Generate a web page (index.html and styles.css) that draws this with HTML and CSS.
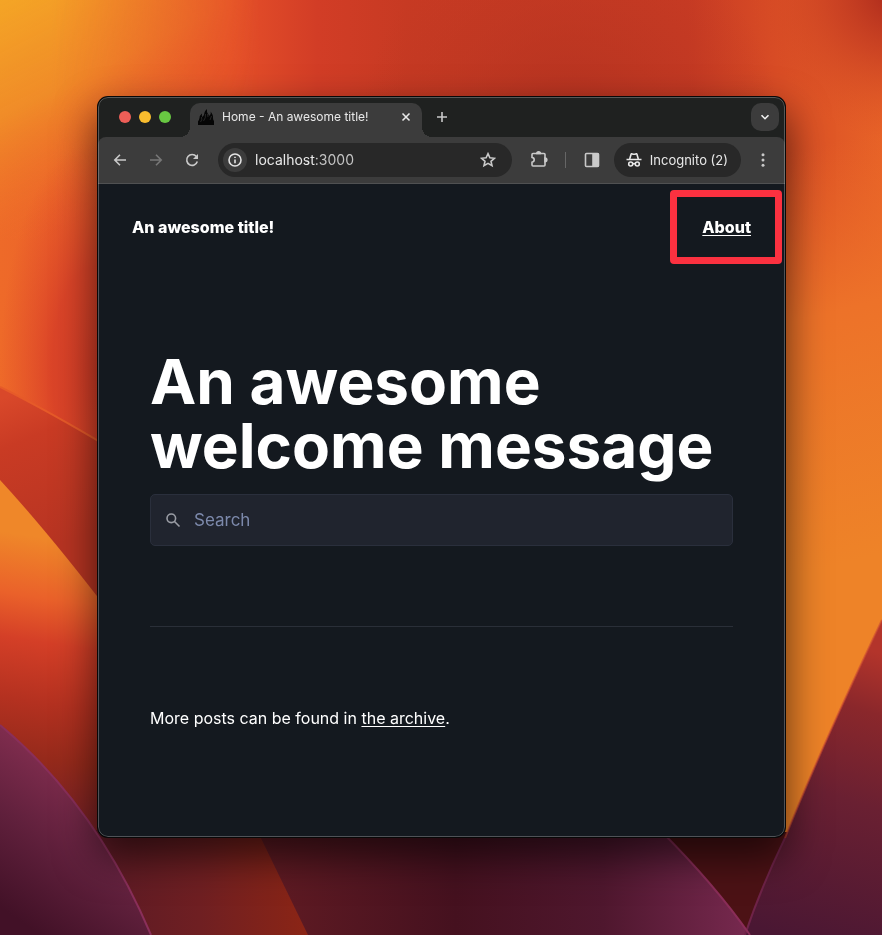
FILE: index.html
```html
<!DOCTYPE html>
<html lang="en">
<head>
<meta charset="utf-8">
<title>Home - An awesome title!</title>
<link rel="stylesheet" href="styles.css">
</head>
<body>
<svg class="wallpaper" viewBox="0 0 882 935" preserveAspectRatio="none" aria-hidden="true">
  <defs>
    <linearGradient id="base" x1="0" y1="0" x2="882" y2="0" gradientUnits="userSpaceOnUse">
      <stop offset="0" stop-color="#ee6a29"/><stop offset=".13" stop-color="#e95c2a"/><stop offset=".26" stop-color="#e65029"/><stop offset=".36" stop-color="#d23d26"/><stop offset=".46" stop-color="#c73a23"/><stop offset=".78" stop-color="#c83b24"/><stop offset=".88" stop-color="#d84c25"/><stop offset="1" stop-color="#e76227"/>
    </linearGradient>
    <linearGradient id="sun" x1="0" y1="0" x2="105" y2="210" gradientUnits="userSpaceOnUse">
      <stop offset="0" stop-color="#f4a526"/><stop offset=".45" stop-color="#f09028" stop-opacity=".9"/><stop offset="1" stop-color="#ee6b2a" stop-opacity="0"/>
    </linearGradient>
    <linearGradient id="sunFade" x1="0" y1="0" x2="260" y2="0" gradientUnits="userSpaceOnUse">
      <stop offset=".2" stop-color="#fff"/><stop offset="1" stop-color="#000"/>
    </linearGradient>
    <mask id="sunMask"><rect width="270" height="240" fill="url(#sunFade)"/></mask>
    <radialGradient id="topDeep" cx="570" cy="130" r="210" gradientUnits="userSpaceOnUse">
      <stop offset="0" stop-color="#b43220"/><stop offset="1" stop-color="#b93621" stop-opacity="0"/>
    </radialGradient>
    <radialGradient id="topRed" cx="900" cy="-10" r="150" gradientUnits="userSpaceOnUse">
      <stop offset=".1" stop-color="#b02d1d"/><stop offset=".45" stop-color="#c33a22" stop-opacity=".7"/><stop offset="1" stop-color="#d94e26" stop-opacity="0"/>
    </radialGradient>
    <linearGradient id="rightSide" x1="760" y1="160" x2="860" y2="560" gradientUnits="userSpaceOnUse">
      <stop offset="0" stop-color="#ec6b29" stop-opacity="0"/><stop offset=".4" stop-color="#ed7229"/><stop offset="1" stop-color="#ee8328"/>
    </linearGradient>
    <radialGradient id="leftRed" cx="95" cy="370" r="1" gradientUnits="userSpaceOnUse" gradientTransform="translate(95 370) scale(95 230) translate(-95 -370)">
      <stop offset="0" stop-color="#d43d27"/><stop offset=".45" stop-color="#d94128" stop-opacity=".9"/><stop offset="1" stop-color="#e24c29" stop-opacity="0"/>
    </radialGradient>
    <linearGradient id="leftSlope" x1="10" y1="395" x2="70" y2="540" gradientUnits="userSpaceOnUse">
      <stop offset="0" stop-color="#d9482a"/><stop offset=".3" stop-color="#c93b24"/><stop offset="1" stop-color="#b73422"/>
    </linearGradient>
    <linearGradient id="leftFlame" x1="60" y1="540" x2="20" y2="810" gradientUnits="userSpaceOnUse">
      <stop offset="0" stop-color="#ef8729"/><stop offset=".22" stop-color="#ea612a"/><stop offset=".38" stop-color="#d43f27"/><stop offset=".6" stop-color="#b43120"/><stop offset=".8" stop-color="#962a1b"/><stop offset="1" stop-color="#7a2224"/>
    </linearGradient>
    <linearGradient id="leftPurple" x1="80" y1="770" x2="-10" y2="900" gradientUnits="userSpaceOnUse">
      <stop offset="0" stop-color="#832e50"/><stop offset=".5" stop-color="#60203c"/><stop offset="1" stop-color="#421127"/>
    </linearGradient>
    <linearGradient id="floor" x1="90" y1="0" x2="310" y2="0" gradientUnits="userSpaceOnUse">
      <stop offset="0" stop-color="#5a1a25"/><stop offset=".5" stop-color="#6f1f22"/><stop offset="1" stop-color="#8c2515"/>
    </linearGradient>
    <linearGradient id="middle" x1="260" y1="0" x2="750" y2="0" gradientUnits="userSpaceOnUse">
      <stop offset="0" stop-color="#611b23"/><stop offset=".4" stop-color="#45111f"/><stop offset=".7" stop-color="#4f172e"/><stop offset="1" stop-color="#77294f"/>
    </linearGradient>
    <linearGradient id="rightPurple" x1="870" y1="650" x2="780" y2="935" gradientUnits="userSpaceOnUse">
      <stop offset="0" stop-color="#b3342b"/><stop offset=".2" stop-color="#8a272b"/><stop offset=".5" stop-color="#6a2032"/><stop offset="1" stop-color="#4a1733"/>
    </linearGradient>
  </defs>
  <rect width="882" height="935" fill="url(#base)"/>
  <rect width="270" height="240" fill="url(#sun)" mask="url(#sunMask)"/>
  <rect x="340" width="450" height="345" fill="url(#topDeep)"/>
  <rect x="740" width="142" height="160" fill="url(#topRed)"/>
  <rect x="700" y="100" width="182" height="835" fill="url(#rightSide)"/>
  <rect y="130" width="190" height="480" fill="url(#leftRed)"/>
  <path d="M0 387 Q50 412 110 448 V650 L0 482Z" fill="url(#leftSlope)"/>
  <path d="M0 387 Q50 412 110 448" fill="none" stroke="#e65a29" stroke-width="2"/>
  <path d="M0 480 Q48 532 110 613 V935 H0Z" fill="url(#leftFlame)"/>
  <path d="M90 830 H260 L310 935 H90Z" fill="url(#floor)"/>
  <path d="M257 830 L308 935 H750 Q722 890 660 830Z" fill="url(#middle)"/>
  <path d="M660 830 Q715 885 750 935 L788 832Z" fill="#4c1215"/>
  <path d="M882 620 Q820 750 785 838 Q760 890 745 935 H882Z" fill="url(#rightPurple)"/>
  <path d="M785 838 Q760 890 745 935" fill="none" stroke="#6f2348" stroke-width="2"/>
  <path d="M882 620 Q820 750 785 838" fill="none" stroke="#c94a32" stroke-width="2" opacity=".6"/>
  <path d="M660 830 Q715 885 750 935" fill="none" stroke="#8a2d58" stroke-width="2"/>
  <path d="M0 725 Q96 805 151 935 H0Z" fill="url(#leftPurple)"/>
  <path d="M0 725 Q96 805 151 935" fill="none" stroke="#8a2f5a" stroke-width="2"/>
</svg>

<div class="window">
  <header class="chrome">
    <div class="tabstrip">
      <div class="lights"><i class="red"></i><i class="yellow"></i><i class="green"></i></div>
      <div class="tab">
        <svg class="favicon" viewBox="0 0 16 16" aria-hidden="true"><path d="M0 16V12.500Q1 11 1.500 9 1.500 6.500 4 4.500 3.500 7 4.500 8 6.500 6 6.500 3.500 7 1.500 9 0 8.500 3 10 5 11 6 11 7 13.500 5 12.500 2.500 15.500 6 15 9 15 11 16 12V16Z" fill="#050505"/><path d="M2.500 13Q4.500 11 3.500 8M5.500 12Q8 9 7.500 5M10 8 9.500 5M12 11 13.500 7" fill="none" stroke="#333" stroke-width=".7"/></svg>
        <span class="tab-title">Home - An awesome title!</span>
        <button class="icon-btn small" aria-label="Close tab"><svg viewBox="0 0 16 16"><path d="M4 4l8 8m0-8l-8 8"/></svg></button>
      </div>
      <button class="icon-btn new-tab" aria-label="New tab"><svg viewBox="0 0 16 16"><path d="M8 3v10M3 8h10"/></svg></button>
      <button class="icon-btn tab-search" aria-label="Search tabs"><svg viewBox="0 0 16 16"><path d="M4.500 6.200l3.500 3.500 3.500-3.500"/></svg></button>
    </div>
    <div class="toolbar">
      <div class="history">
        <button class="icon-btn" aria-label="Back"><svg viewBox="0 0 16 16"><path d="M14 8H3M8 2.800L2.800 8 8 13.200"/></svg></button>
        <button class="icon-btn dim" aria-label="Forward" disabled><svg viewBox="0 0 16 16"><path d="M2 8h11M8 2.800L13.200 8 8 13.200"/></svg></button>
        <button class="icon-btn" aria-label="Reload"><svg viewBox="0 0 16 16"><path d="M13.300 9.500A5.400 5.400 0 1 1 12.300 4.500"/><path d="M14 2v5H9z" fill="currentColor" stroke="none"/></svg></button>
      </div>
      <div class="address">
        <button class="icon-btn site-info" aria-label="Site information"><svg viewBox="0 0 16 16"><circle cx="8" cy="8" r="6"/><path d="M8 7.400v3.800M8 4.700v1.400"/></svg></button>
        <span class="url">localhost<span>:3000</span></span>
        <button class="icon-btn" aria-label="Bookmark"><svg viewBox="0 0 16 16"><path d="M8 1.700l1.900 4.100 4.500.5-3.400 3 1 4.400L8 11.400l-4 2.300 1-4.400-3.400-3 4.500-.5z"/></svg></button>
      </div>
      <div class="actions">
        <button class="icon-btn" aria-label="Extensions"><svg class="puzzle" viewBox="0 0 20 20"><path d="M4 3.500H15Q16 3.500 16 4.500V15Q16 16 15 16H4Q3 16 3 15V12.200Q5.200 11.800 5.200 9.800T3 7.400V4.500Q3 3.500 4 3.500Z"/><path d="M7.800 3.500a1.800 1.800 0 0 1 3.600 0zM16 8a1.800 1.800 0 0 1 0 3.600z" fill="currentColor"/></svg></button>
        <span class="divider"></span>
        <button class="icon-btn" aria-label="Side panel"><svg viewBox="0 0 16 16"><rect x="1.500" y="1.500" width="13" height="13" rx="1"/><path d="M9 2h5v12H9z" fill="currentColor"/></svg></button>
      </div>
      <button class="incognito"><svg viewBox="0 0 16 16" aria-hidden="true"><path d="M.5 7.500h15"/><path d="M3.700 7L5 2.500Q5.300 1.500 6.300 1.900 8 2.600 9.700 1.900 10.700 1.500 11 2.500L12.300 7"/><circle cx="4.700" cy="12" r="2"/><circle cx="11.300" cy="12" r="2"/><path d="M6.700 12q1.300-1 2.600 0"/></svg>Incognito (2)</button>
      <button class="icon-btn menu" aria-label="Menu"><svg viewBox="0 0 16 16"><g fill="currentColor" stroke="none"><circle cx="8" cy="2.800" r="1.500"/><circle cx="8" cy="8" r="1.500"/><circle cx="8" cy="13.200" r="1.500"/></g></svg></button>
    </div>
  </header>

  <div class="page">
    <nav class="nav">
      <a class="brand" href="#">An awesome title!</a>
      <a class="about" href="#about">About</a>
    </nav>
    <main class="content">
      <h1>An awesome welcome message</h1>
      <label class="search">
        <svg viewBox="0 0 16 16" aria-hidden="true"><circle cx="6.300" cy="6.300" r="4.300"/><path d="M9.500 9.500l5 5"/></svg>
        <input type="search" placeholder="Search" aria-label="Search">
      </label>
      <hr>
      <p>More posts can be found in <a href="#archive">the archive</a>.</p>
    </main>
  </div>
</div>
</body>
</html>
```
FILE: styles.css
```css
* { box-sizing: border-box; }

body {
  margin: 0;
  min-height: 100vh;
  padding: 97px 97px 98px 98px;
  display: flex;
  font-family: Inter, "Liberation Sans", sans-serif;
  color: #fff;
}

.wallpaper {
  position: fixed;
  inset: 0;
  width: 100%;
  height: 100%;
  z-index: -1;
}

.window {
  flex: 1;
  display: flex;
  flex-direction: column;
  min-width: 0;
  position: relative;
  border-radius: 10px;
  overflow: hidden;
  background: #14191f;
  box-shadow: 0 0 0 1px #080808, 0 18px 40px 2px rgba(0, 0, 0, .6);
}

.window::after {
  content: "";
  position: absolute;
  inset: 0;
  border: 1px solid rgba(255, 255, 255, .25);
  border-radius: inherit;
  pointer-events: none;
}

.chrome { background: #1f2120; color: #c9c9c9; }

button {
  border: 0;
  padding: 0;
  background: none;
  color: inherit;
  font: inherit;
}

svg { display: block; }

.icon-btn {
  flex: none;
  width: 24px;
  height: 24px;
  display: grid;
  place-items: center;
}

.icon-btn svg,
.incognito svg,
.search svg {
  width: 16px;
  height: 16px;
  fill: none;
  stroke: currentColor;
  stroke-width: 1.6;
}

.icon-btn .puzzle { width: 20px; height: 20px; }
.dim { color: #777; }

.tabstrip {
  height: 40px;
  padding: 6px 6px 0 21px;
  display: flex;
  align-items: flex-start;
}

.lights { display: flex; gap: 8px; padding-top: 8px; margin-right: 19px; }
.lights i { width: 12px; height: 12px; border-radius: 50%; }
.red { background: #ed5e57; }
.yellow { background: #f8bc2e; }
.green { background: #68c742; }

.tab {
  position: relative;
  width: 232px;
  height: 34px;
  padding: 0 4px 6px 8px;
  display: flex;
  align-items: center;
  background: #3c3c3c;
  border-radius: 10px 10px 0 0;
  color: #e8e8e8;
}

.tab::before,
.tab::after {
  content: "";
  position: absolute;
  bottom: 0;
  width: 10px;
  height: 10px;
}

.tab::before { right: 100%; background: radial-gradient(circle at 0 0, transparent 10px, #3c3c3c 10px); }
.tab::after { left: 100%; background: radial-gradient(circle at 100% 0, transparent 10px, #3c3c3c 10px); }

.favicon { width: 16px; height: 16px; margin-right: 8px; }
.tab-title { flex: 1; font-size: 12px; line-height: 16px; white-space: nowrap; }
.small svg { width: 14px; height: 14px; stroke-width: 1.8; }
.new-tab { margin: 2px 0 0 8px; }
.tab-search {
  width: 28px;
  height: 28px;
  margin-left: auto;
  border-radius: 10px;
  background: #3c3c3c;
  color: #f0f0f0;
}

.toolbar {
  height: 47px;
  padding: 0 10px;
  display: flex;
  align-items: center;
  background: #3c3c3c;
  border-bottom: 1px solid #505152;
  border-radius: 8px 8px 0 0;
}

.history { display: flex; gap: 12px; margin-right: 14px; }

.address {
  flex: 1;
  height: 34px;
  padding: 0 12px 0 5px;
  display: flex;
  align-items: center;
  border-radius: 17px;
  background: #282828;
}

.site-info { border-radius: 50%; background: #3c3c3c; color: #e3e3e3; }
.url { flex: 1; margin-left: 8px; font-size: 14px; line-height: 20px; color: #e8e8e8; }
.url span { color: #c4c4c4; }

.actions { display: flex; align-items: center; gap: 14px; margin: 0 10px 0 15px; }
.divider { width: 1px; height: 16px; background: #666; }

.incognito {
  height: 34px;
  padding: 0 13px 0 12px;
  display: flex;
  align-items: center;
  gap: 8px;
  border-radius: 17px;
  background: #282828;
  color: #e8e8e8;
  font-size: 13px;
  white-space: nowrap;
}

.menu { margin-left: 10px; }

.page { flex: 1; padding: 0 34px; }

.nav {
  display: flex;
  justify-content: space-between;
  padding: 31px 0;
  font-size: 16px;
  line-height: 24px;
  font-weight: 800;
}

a { color: inherit; }
.brand { text-decoration: none; }
.about { position: relative; text-underline-offset: 2px; }

.about::after {
  content: "";
  position: absolute;
  inset: -25px -31px -25px -32px;
  border: 7px solid #fc3140;
  border-radius: 4px;
}

.content { padding: 80px 18px; }

h1 { margin: 0 0 16px; font-size: 62px; line-height: 64px; font-weight: 700; }

.search {
  height: 52px;
  padding: 0 14px;
  display: flex;
  align-items: center;
  gap: 13px;
  border: 1px solid #2a2f3c;
  border-radius: 5px;
  background: #20242e;
  color: #9a9da5;
}

.search input {
  flex: 1;
  min-width: 0;
  border: 0;
  padding: 0;
  outline: 0;
  background: none;
  color: #fff;
  font: 17px/24px Inter, "Liberation Sans", sans-serif;
}

.search input::placeholder { color: #7c89ab; opacity: 1; }

hr { margin: 80px 0 79px; border: 0; border-top: 1px solid #2a2f38; }

p { margin: 0; font-size: 16px; line-height: 24px; }
p a { text-underline-offset: 2px; }
```
